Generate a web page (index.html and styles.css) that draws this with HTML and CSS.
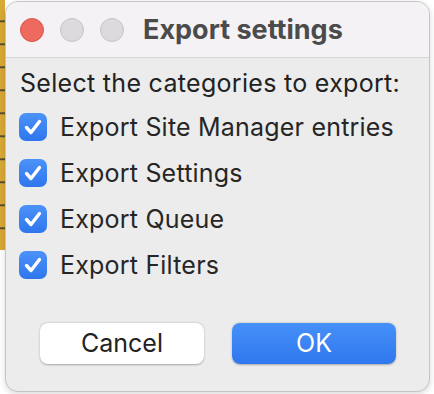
FILE: index.html
```html
<!DOCTYPE html>
<html lang="en">
<head>
    <meta charset="UTF-8">
    <title>Export settings</title>
    <link rel="stylesheet" href="styles.css">
</head>
<body>
    <div class="desk">
        <div class="edge"></div>
        <div class="dialog">
            <div class="titlebar">
                <span class="light close"></span>
                <span class="light"></span>
                <span class="light"></span>
                <span class="title">Export settings</span>
            </div>
            <div class="content">
                <p class="prompt">Select the categories to export:</p>
                <label class="row"><span class="check"><svg viewBox="0 0 28 28"><path d="M7.5 14.5 L12 19.5 L20.5 8.5"/></svg></span>Export Site Manager entries</label>
                <label class="row"><span class="check"><svg viewBox="0 0 28 28"><path d="M7.5 14.5 L12 19.5 L20.5 8.5"/></svg></span>Export Settings</label>
                <label class="row"><span class="check"><svg viewBox="0 0 28 28"><path d="M7.5 14.5 L12 19.5 L20.5 8.5"/></svg></span>Export Queue</label>
                <label class="row"><span class="check"><svg viewBox="0 0 28 28"><path d="M7.5 14.5 L12 19.5 L20.5 8.5"/></svg></span>Export Filters</label>
                <div class="buttons">
                    <a href="#" class="btn">Cancel</a>
                    <a href="#" class="btn primary">OK</a>
                </div>
            </div>
        </div>
    </div>
</body>
</html>
```

FILE: styles.css
```css
html,body{
    margin: 0;
    padding: 0;
}
body{
    width: 434px;
    height: 394px;
    overflow: hidden;
    background: #fff;
    font-family: Inter, "Liberation Sans", sans-serif;
}
.desk{
    display: flex;
    height: 394px;
}
.edge{
    width: 5px;
    height: 250px;
    background: repeating-linear-gradient(#d9a935 0, #d9a935 20px, #2a2a2a 21px, #e2b641 23px);
}
.dialog{
    width: 423px;
    height: 389px;
    margin-top: 1px;
    border: 1px solid #c4c4c4;
    border-radius: 13px;
    background: #ececec;
    overflow: hidden;
    box-shadow: 0 2px 6px rgba(0,0,0,0.15);
}
.titlebar{
    display: flex;
    align-items: center;
    height: 55px;
    padding-left: 14px;
    background: #f4f2f5;
    border-bottom: 1px solid #d6d4d7;
}
.light{
    width: 22px;
    height: 22px;
    margin-right: 16px;
    border-radius: 50%;
    background: #dcdadd;
    border: 1px solid #c6c4c7;
}
.light.close{
    background: #ee6a5f;
    border-color: #d6574d;
}
.title{
    margin-left: 3px;
    font-size: 27px;
    font-weight: 700;
    color: #4b4b4b;
}
.content{
    padding: 8px 0 0 13px;
    color: #222;
}
.prompt{
    margin: 0 0 4px 1px;
    font-size: 25px;
    line-height: 34px;
    letter-spacing: 0.3px;
}
.row{
    display: flex;
    align-items: center;
    height: 46px;
    font-size: 25px;
    letter-spacing: 0.2px;
    color: #262626;
}
.check{
    width: 28px;
    height: 28px;
    margin-right: 13px;
    border-radius: 7px;
    background: linear-gradient(#4b92f9, #2f76ee);
}
.check svg{
    display: block;
    width: 28px;
    height: 28px;
    fill: none;
    stroke: #fff;
    stroke-width: 3.4;
    stroke-linecap: round;
    stroke-linejoin: round;
}
.buttons{
    display: flex;
    gap: 28px;
    margin: 35px 0 0 21px;
}
.btn{
    display: block;
    width: 164px;
    height: 41px;
    line-height: 41px;
    text-align: center;
    font-size: 25px;
    color: #222;
    text-decoration: none;
    background: #fff;
    border-radius: 8px;
    box-shadow: 0 0.5px 2px rgba(0,0,0,0.3);
}
.btn.primary{
    color: #fff;
    background: linear-gradient(#4690f8, #2f77ee);
}
```
